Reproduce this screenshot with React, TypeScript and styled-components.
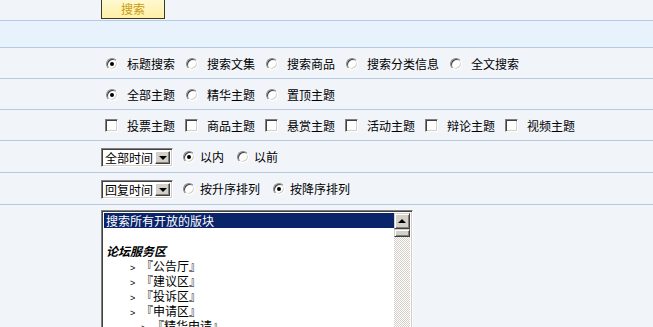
import React from 'react';
import styled, { createGlobalStyle } from 'styled-components';

const GlobalStyle = createGlobalStyle`
  html, body {
    margin: 0;
    padding: 0;
    background: #f1f5fa;
    overflow: hidden;
  }
  body {
    font-family: "Noto Sans CJK SC", "Liberation Sans", sans-serif;
    font-size: 12px;
    color: #000;
  }
`;

const lineColor = '#b7cbe0';

const Form = styled.div`
  width: 100%;
`;

const Row = styled.div<{ h?: number; tone?: 'band' }>`
  display: grid;
  grid-template-columns: 101px 1fr;
  align-items: center;
  min-height: ${p => p.h ?? 30}px;
  border-bottom: 1px solid ${lineColor};
  background: ${p => (p.tone === 'band' ? '#e8f2fd' : 'transparent')};
`;

const TopRow = styled(Row)`
  align-items: start;
  height: 20px;
  min-height: 0;
  overflow: hidden;
`;

const ListRow = styled(Row)`
  align-items: start;
  border-bottom: none;
  padding-top: 5px;
`;

const LabelCell = styled.div``;

const FieldCell = styled.div`
  display: flex;
  align-items: center;
  padding-top: 1px;
`;

const SubmitButton = styled.button`
  margin-top: -6px;
  width: 64px;
  height: 21px;
  padding: 0;
  border: 1px solid #3a3a2a;
  background: linear-gradient(#fff9d2, #ffefa6);
  color: #c89a10;
  font-family: inherit;
  font-size: 12px;
  line-height: 19px;
  text-align: center;
`;

const Option = styled.label<{ compact?: boolean }>`
  display: inline-flex;
  align-items: center;
  margin-right: ${p => (p.compact ? 13 : 6)}px;
  white-space: nowrap;
  line-height: 14px;
`;

const RadioMark = styled.span<{ checked?: boolean; compact?: boolean }>`
  position: relative;
  box-sizing: border-box;
  width: 12px;
  height: 12px;
  margin: ${p => (p.compact ? '0 5px 0 0' : '0 9px 0 5px')};
  border-radius: 50%;
  border: 1px solid;
  border-color: #8a8a8a #ffffff #ffffff #8a8a8a;
  box-shadow: inset 1px 1px 0 #404040, inset -1px -1px 0 #d4d0c8;
  background: #fff;

  &::after {
    content: '';
    display: ${p => (p.checked ? 'block' : 'none')};
    position: absolute;
    left: 3px;
    top: 3px;
    width: 4px;
    height: 4px;
    border-radius: 50%;
    background: #000;
  }
`;

const CheckMark = styled.span`
  box-sizing: border-box;
  width: 13px;
  height: 13px;
  margin: 0 9px 0 4px;
  border: 1px solid;
  border-color: #808080 #ffffff #ffffff #808080;
  box-shadow: inset 1px 1px 0 #404040, inset -1px -1px 0 #d4d0c8;
  background: #fff;
`;

const FakeSelect = styled.div`
  box-sizing: border-box;
  display: flex;
  align-items: stretch;
  width: 72px;
  height: 19px;
  margin-right: 10px;
  border: 1px solid;
  border-color: #808080 #ffffff #ffffff #808080;
  box-shadow: inset 1px 1px 0 #404040, inset -1px -1px 0 #d4d0c8;
  background: #fff;
  padding: 2px 2px 2px 2px;
`;

const SelectText = styled.span`
  flex: 1;
  padding-left: 1px;
  line-height: 14px;
`;

const DropButton = styled.span`
  box-sizing: border-box;
  width: 15px;
  display: flex;
  align-items: center;
  justify-content: center;
  background: #d4d0c8;
  border: 1px solid;
  border-color: #ffffff #404040 #404040 #ffffff;
  box-shadow: inset -1px -1px 0 #808080;

  &::before {
    content: '';
    border-left: 4px solid transparent;
    border-right: 4px solid transparent;
    border-top: 4px solid #000;
    margin-top: 1px;
  }
`;

const ListBox = styled.div`
  box-sizing: border-box;
  display: flex;
  width: 312px;
  height: 200px;
  border: 1px solid;
  border-color: #808080 #ffffff #ffffff #808080;
  box-shadow: inset 1px 1px 0 #404040, inset -1px -1px 0 #d4d0c8;
  background: #fff;
  padding: 2px;
`;

const Options = styled.div`
  flex: 1;
  overflow: hidden;
`;

const ListItem = styled.div<{ selected?: boolean; level: number; group?: boolean }>`
  height: 15px;
  line-height: 15px;
  white-space: nowrap;
  padding-left: ${p => (p.level === 0 ? 2 : 15 + p.level * 11)}px;
  background: ${p => (p.selected ? '#0a246a' : 'transparent')};
  color: ${p => (p.selected ? '#fff' : '#000')};
  font-weight: ${p => (p.group ? 'bold' : 'normal')};
  font-style: ${p => (p.group ? 'italic' : 'normal')};
`;

const Caret = styled.span`
  display: inline-block;
  width: 11px;
  font-family: "Liberation Sans", sans-serif;
  font-size: 9px;
`;

const ScrollBar = styled.div`
  width: 16px;
  display: flex;
  flex-direction: column;
  background: repeating-conic-gradient(#d4d0c8 0 25%, #ffffff 0 50%) 0 0 / 2px 2px;
`;

const ScrollButton = styled.div`
  box-sizing: border-box;
  height: 16px;
  display: flex;
  align-items: center;
  justify-content: center;
  background: #d4d0c8;
  border: 1px solid;
  border-color: #d4d0c8 #404040 #404040 #d4d0c8;
  box-shadow: inset 1px 1px 0 #fff, inset -1px -1px 0 #808080;

  &::before {
    content: '';
    border-left: 4px solid transparent;
    border-right: 4px solid transparent;
    border-bottom: 4px solid #000;
    margin-bottom: 1px;
  }
`;

const ScrollThumb = styled.div`
  box-sizing: border-box;
  height: 8px;
  background: #d4d0c8;
  border: 1px solid;
  border-color: #d4d0c8 #404040 #404040 #d4d0c8;
  box-shadow: inset 1px 1px 0 #fff, inset -1px -1px 0 #808080;
`;

type Choice = { label: string; checked?: boolean };

const searchTypes: Choice[] = [
  { label: '标题搜索', checked: true },
  { label: '搜索文集' },
  { label: '搜索商品' },
  { label: '搜索分类信息' },
  { label: '全文搜索' },
];

const topicScopes: Choice[] = [
  { label: '全部主题', checked: true },
  { label: '精华主题' },
  { label: '置顶主题' },
];

const specialTopics = ['投票主题', '商品主题', '悬赏主题', '活动主题', '辩论主题', '视频主题'];

const forums: { label: string; level: number; group?: boolean; selected?: boolean }[] = [
  { label: '搜索所有开放的版块', level: 0, selected: true },
  { label: '', level: 0 },
  { label: '论坛服务区', level: 0, group: true },
  { label: '『公告厅』', level: 1 },
  { label: '『建议区』', level: 1 },
  { label: '『投诉区』', level: 1 },
  { label: '『申请区』', level: 1 },
  { label: '『精华申请』', level: 2 },
  { label: '『版主申请』', level: 2 },
  { label: '『友情链接』', level: 1 },
  { label: '『回收站』', level: 1 },
];

const Radio = ({ label, checked, compact }: Choice & { compact?: boolean }) => (
  <Option compact={compact}>
    <RadioMark checked={checked} compact={compact} />
    {label}
  </Option>
);

const Select = ({ value }: { value: string }) => (
  <FakeSelect>
    <SelectText>{value}</SelectText>
    <DropButton />
  </FakeSelect>
);

export default function App() {
  return (
    <Form>
      <GlobalStyle />
      <TopRow>
        <LabelCell />
        <div>
          <SubmitButton>搜索</SubmitButton>
        </div>
      </TopRow>

      <Row h={26} tone="band" />

      <Row>
        <LabelCell />
        <FieldCell>
          {searchTypes.map(c => (
            <Radio key={c.label} {...c} />
          ))}
        </FieldCell>
      </Row>

      <Row>
        <LabelCell />
        <FieldCell>
          {topicScopes.map(c => (
            <Radio key={c.label} {...c} />
          ))}
        </FieldCell>
      </Row>

      <Row>
        <LabelCell />
        <FieldCell>
          {specialTopics.map(t => (
            <Option key={t}>
              <CheckMark />
              {t}
            </Option>
          ))}
        </FieldCell>
      </Row>

      <Row h={31}>
        <LabelCell />
        <FieldCell>
          <Select value="全部时间" />
          <Radio label="以内" checked compact />
          <Radio label="以前" compact />
        </FieldCell>
      </Row>

      <Row h={31}>
        <LabelCell />
        <FieldCell>
          <Select value="回复时间" />
          <Radio label="按升序排列" compact />
          <Radio label="按降序排列" checked compact />
        </FieldCell>
      </Row>

      <ListRow>
        <LabelCell />
        <ListBox>
          <Options>
            {forums.map((f, i) => (
              <ListItem key={i} level={f.level} group={f.group} selected={f.selected}>
                {f.level > 0 && <Caret>&gt;</Caret>}
                {f.label}
              </ListItem>
            ))}
          </Options>
          <ScrollBar>
            <ScrollButton />
            <ScrollThumb />
          </ScrollBar>
        </ListBox>
      </ListRow>
    </Form>
  );
}
